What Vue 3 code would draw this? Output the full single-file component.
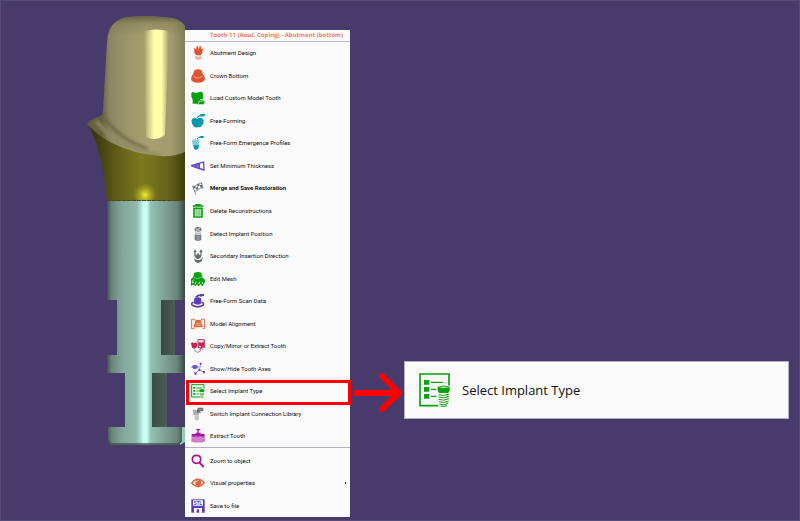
<template>
  <main class="scene">
    <!-- 3D preview of the abutment -->
    <svg class="model" viewBox="0 0 185 521" preserveAspectRatio="xMaxYMin slice" role="img" aria-label="Abutment preview">
      <defs>
        <linearGradient id="crown" gradientUnits="userSpaceOnUse" x1="102" y1="0" x2="194" y2="0">
          <stop offset="0" stop-color="#65613f" />
          <stop offset=".08" stop-color="#8b8660" />
          <stop offset=".3" stop-color="#9c976b" />
          <stop offset=".5" stop-color="#a7a170" />
          <stop offset=".75" stop-color="#a19b6d" />
          <stop offset="1" stop-color="#6f6b4a" />
        </linearGradient>
        <linearGradient id="crownTop" gradientUnits="userSpaceOnUse" x1="0" y1="16" x2="0" y2="36">
          <stop offset="0" stop-color="#4c4930" stop-opacity=".75" />
          <stop offset=".4" stop-color="#6e6a46" stop-opacity=".3" />
          <stop offset="1" stop-color="#6e6a46" stop-opacity="0" />
        </linearGradient>
        <linearGradient id="shine" gradientUnits="userSpaceOnUse" x1="144" y1="0" x2="169" y2="0">
          <stop offset="0" stop-color="#ffffaa" stop-opacity="0" />
          <stop offset=".4" stop-color="#ffffaa" />
          <stop offset=".7" stop-color="#ffffaa" />
          <stop offset="1" stop-color="#ffffaa" stop-opacity="0" />
        </linearGradient>
        <linearGradient id="gold" gradientUnits="userSpaceOnUse" x1="92" y1="0" x2="188" y2="0">
          <stop offset="0" stop-color="#36330f" />
          <stop offset=".25" stop-color="#5f5b17" />
          <stop offset=".52" stop-color="#7d791f" />
          <stop offset=".8" stop-color="#66621a" />
          <stop offset="1" stop-color="#393711" />
        </linearGradient>
        <radialGradient id="spark" gradientUnits="userSpaceOnUse" cx="145" cy="195" r="13">
          <stop offset="0" stop-color="#f4f02f" />
          <stop offset=".35" stop-color="#c4bf27" stop-opacity=".8" />
          <stop offset="1" stop-color="#8b8720" stop-opacity="0" />
        </radialGradient>
        <linearGradient id="steel" gradientUnits="userSpaceOnUse" x1="107" y1="0" x2="185" y2="0">
          <stop offset="0" stop-color="#43534e" />
          <stop offset=".06" stop-color="#6a857d" />
          <stop offset=".2" stop-color="#84a79c" />
          <stop offset=".38" stop-color="#8eb9ac" />
          <stop offset=".43" stop-color="#a6e0d2" />
          <stop offset=".47" stop-color="#ccfff4" />
          <stop offset=".51" stop-color="#ccfff4" />
          <stop offset=".56" stop-color="#91c2b4" />
          <stop offset=".7" stop-color="#84a89c" />
          <stop offset=".9" stop-color="#6a867c" />
          <stop offset="1" stop-color="#394641" />
        </linearGradient>
        <linearGradient id="dark" x1="0" y1="0" x2="1" y2="0">
          <stop offset="0" stop-color="#3b4844" />
          <stop offset="1" stop-color="#4c5d57" />
        </linearGradient>
        <filter id="soft"><feGaussianBlur stdDeviation="1.5" /></filter>
        <clipPath id="collarClip"><path :d="collar" /></clipPath>
      </defs>
      <path d="M87 124C96 137 103 160 107 201H185V145L110 140Z" fill="url(#gold)" />
      <ellipse cx="145" cy="193" rx="13" ry="9" fill="url(#spark)" />
      <path d="M107 200.5H185" stroke="#4a4618" stroke-dasharray="4 1" />
      <path :d="collar" fill="url(#crown)" />
      <path :d="collar" fill="url(#crownTop)" />
      <g clip-path="url(#collarClip)">
        <path d="M105 119C118 135 130 143 148 149" fill="none" stroke="#5d5938" stroke-width="3" filter="url(#soft)" opacity=".7" />
        <path d="M96 121C110 139 130 151 160 155" fill="none" stroke="#8f8b64" stroke-width="3" filter="url(#soft)" />
        <path d="M87 124L98 117L105 113" fill="none" stroke="#5f5c3c" stroke-width="2" filter="url(#soft)" />
      </g>
      <path d="M144 31Q156 28 169 31L165 135Q156 142 146 137Z" fill="url(#shine)" />

      <rect x="161" y="299" width="14" height="57" fill="url(#dark)" />
      <rect x="151" y="372" width="16" height="56" fill="url(#dark)" />
      <path d="M178 427H185V442L180 445Z" fill="#96cabb" />
      <path d="M107 201H185V300H161V355H185V373H152V427H182V441Q180 445 176 445H113Q108 445 108 440V427H125V373H107V355H117V300H107Z" fill="url(#steel)" />
      <path d="M108 440Q109 445 113 445H176Q180 445 182 440L178 443H112Z" fill="#394a43" opacity=".7" />
    </svg>

    <nav class="menu" aria-label="Tooth 11">
      <h1 class="menu_title">Tooth 11 (Anat. Coping) - Abutment (bottom)</h1>
      <ul v-for="(group, n) in groups" :key="n" class="group" :class="'group_' + n">
        <li v-for="item in group" :key="item.label" :class="{ marked: item.label === selected }">
          <button type="button" class="item" :class="{ bold: item.bold }" @click="selected = item.label">
            <svg class="icon" viewBox="0 0 42 42" aria-hidden="true" :color="item.color">
              <path
                v-for="(s, i) in item.shapes"
                :key="i"
                :d="s.d"
                :fill="s.w ? 'none' : s.c || 'currentColor'"
                :stroke="s.w ? s.c || 'currentColor' : 'none'"
                :stroke-width="s.w"
                :opacity="s.o"
              />
              <text v-if="item.tag" x="21" y="17" text-anchor="middle" class="tag">{{ item.tag }}</text>
            </svg>
            <span>{{ item.label }}</span>
            <span v-if="item.more" class="more" aria-hidden="true"></span>
          </button>
        </li>
      </ul>
    </nav>

    <section class="detail">
      <svg class="arrow" viewBox="0 0 54 57" aria-hidden="true">
        <path d="M6 32H48M32 15L49 32L32 48" fill="none" stroke="#fe0000" stroke-width="6" stroke-linecap="round" stroke-linejoin="round" />
      </svg>
      <div class="callout">
        <svg class="callout_icon" viewBox="0 0 93 102" fill="#0e9f12" aria-hidden="true">
          <path d="M58 98H3V3H90V38" fill="none" stroke="#0e9f12" stroke-width="5" />
          <path d="M15 21H31V35H15ZM15 42H31V56H15ZM15 63H31V77H15Z" />
          <path d="M36 28H72M36 49H52M36 70H52" fill="none" stroke="#0e9f12" stroke-width="4" />
          <path d="M56 42Q74 33 92 42V54L87 60H61L56 54Z" />
          <path d="M59 43Q74 38 89 43Q74 48 59 43Z" fill="#b6e2b6" />
          <path d="M59 65Q74 71 90 63M59 72Q74 78 90 70M59 79Q74 85 90 77M60 86Q74 92 89 84M61 93Q74 99 88 91M65 99Q75 102 84 98" fill="none" stroke="#0e9f12" stroke-width="3" />
        </svg>
        <span>Select Implant Type</span>
      </div>
    </section>
  </main>
</template>

<script setup>
import { ref } from 'vue';

const selected = ref('Select Implant Type');

const collar = 'M87 124Q93 118 98 117Q103 116 103 110L107 42Q108 20 128 17Q150 15 172 18Q182 20 187 29V151Q175 157 160 156Q134 154 112 143Q98 136 87 124Z';

// d: path, w: stroke width (filled when missing), c: colour, o: opacity
const groups = [
  [
    { label: 'Abutment Design', color: '#dc5530', shapes: [
      { d: 'M9 5L15 11L17 1H21L23 11L26 1H30L31 10L36 7L34 20L29 28H15L10 20Z' },
      { d: 'M13 29Q22 34 32 29Q34 41 22 41Q11 41 13 29Z', o: 0.45 },
    ] },
    { label: 'Crown Bottom', color: '#dc5530', shapes: [
      { d: 'M10 4Q21 -3 32 4L36 16Q42 21 42 30Q40 41 21 41Q2 41 0 30Q0 21 6 16Z' },
      { d: 'M8 20Q11 27 21 27Q31 27 34 20', w: 2, c: '#f7cfc4' },
    ] },
    { label: 'Load Custom Model Tooth', color: '#0ba010', shapes: [
      { d: 'M1 6Q6 0 12 5Q17 7 22 4Q32 0 36 7V24H24L19 38H5V26L1 17Z' },
      { d: 'M19 23H26L28 26H38V30H42L38 40H17Z' },
      { d: 'M22 39L25 30H41', w: 2, c: '#e2f4e2' },
    ] },
    { label: 'Free-Forming', color: '#0899ad', shapes: [
      { d: 'M4 14Q11 8 18 14L24 11Q36 10 38 20Q39 28 33 34Q30 42 24 39Q15 42 9 38Q-3 24 4 14Z' },
      { d: 'M18 11Q24 3 31 4', w: 4 },
      { d: 'M28 0H42V6L29 8Z' },
    ] },
    { label: 'Free-Form Emergence Profiles', color: '#0899ad', shapes: [
      { d: 'M5 8L9 14L13 5L17 15L21 5L25 15L24 29H7L3 18Z', o: 0.5 },
      { d: 'M7 28H24Q24 41 15 42Q7 40 7 28Z' },
      { d: 'M18 9Q22 2 29 3', w: 3 },
      { d: 'M27 0H38V6H28Z' },
    ] },
    { label: 'Set Minimum Thickness', color: '#6748bd', shapes: [
      { d: 'M1 20L22 13H24L38 9L39 33L20 27Z', w: 4 },
      { d: 'M10 21L25 16V25L12 22', w: 4 },
    ] },
    { label: 'Merge and Save Restoration', bold: true, color: '#606568', shapes: [
      { d: 'M5 15Q12 18 18 11Q25 4 32 6L36 21Q27 20 22 26Q16 32 9 29M5 15L14 41', w: 2 },
      { d: 'M6 17L12 15L14 21L8 23ZM18 11L24 7L26 13L20 17ZM14 21L20 17L22 24L17 27ZM26 13L33 12L35 19L29 20ZM29 6L32 5L33 9L30 10Z' },
    ] },
    { label: 'Delete Reconstructions', color: '#0ba010', shapes: [
      { d: 'M5 6H37M15 5V1H27V5', w: 5 },
      { d: 'M9 13H33V39H9Z', w: 5 },
      { d: 'M12 16H30V36H12Z', o: 0.3 },
      { d: 'M16 17V35M21 17V35M26 17V35', w: 2, o: 0.4 },
    ] },
    { label: 'Detect Implant Position', color: '#787c80', shapes: [
      { d: 'M11 3Q21 -3 31 3V12Q21 17 11 12Z' },
      { d: 'M14 5L20 8L27 4M15 11L20 8L26 11', w: 2, c: '#e7e7e8' },
      { d: 'M12 15Q21 20 30 15V20Q21 24 12 20Z', o: 0.5 },
      { d: 'M11 22Q21 26 31 22V38Q21 45 11 38Z' },
      { d: 'M15 30H27M17 36H25', w: 2, c: '#c7c9ca' },
    ] },
    { label: 'Secondary Insertion Direction', color: '#666a6d', shapes: [
      { d: 'M12 5V19Q15 28 21 28Q28 27 30 19V5', w: 4 },
      { d: 'M8 9L12 1L17 9ZM25 9L30 1L35 9ZM14 21L21 11L28 21L24 28H18Z' },
      { d: 'M9 22Q10 34 21 33Q32 34 35 22L33 35Q27 42 21 41Q13 42 11 35Z' },
    ] },
    { label: 'Edit Mesh', color: '#0ba010', shapes: [
      { d: 'M10 2Q21 -2 31 2L34 16L42 24V31L36 29L31 35L26 29L21 37L16 29L10 35L6 27L0 29V21L7 15Z' },
      { d: 'M2 28V38L8 34L13 40L18 33L23 40L29 33L34 40L40 29', w: 4 },
      { d: 'M8 16L19 20L33 16M3 26L10 23', w: 2, c: '#a0dba2' },
    ] },
    { label: 'Free-Form Scan Data', color: '#5c40b3', shapes: [
      { d: 'M10 13Q21 6 30 13L32 28Q21 36 8 28Z' },
      { d: 'M7 25Q-1 28 4 34Q20 43 36 34Q40 28 33 25', w: 5 },
      { d: 'M14 10Q23 2 30 4', w: 5 },
      { d: 'M27 0H39V6L28 8Z' },
    ] },
    { label: 'Model Alignment', color: '#e3663b', shapes: [
      { d: 'M7 7H2V35H7M35 7H40V35H35', w: 3 },
      { d: 'M13 9H29L31 19Q35 21 35 31H8Q7 22 12 19Z' },
      { d: 'M14 20H30M15 25H29', w: 2, c: '#f5c8b7' },
      { d: 'M8 4L13 8L8 11ZM34 4V11L29 8ZM8 32H14L8 37Z' },
    ] },
    { label: 'Copy/Mirror or Extract Tooth', color: '#bd254f', shapes: [
      { d: 'M0 13L5 10L9 13L15 10L19 14L17 25L11 29L3 26Z' },
      { d: 'M21 2H40V26H21Z', w: 3 },
      { d: 'M22 13L27 8L31 12L39 7V23L31 24L27 20L22 23Z' },
      { d: 'M11 30Q11 40 20 40Q29 40 30 29M25 33L30 27L35 33', w: 2 },
    ] },
    { label: 'Show/Hide Tooth Axes', color: '#6850b8', shapes: [
      { d: 'M0 15Q12 2 24 15Q12 28 0 15Z', o: 0.75 },
      { d: 'M12 9Q18 10 18 15Q17 21 12 21Q6 20 6 15Q7 10 12 9Z' },
      { d: 'M12 35L25 24L39 31M25 24L29 5', w: 2 },
      { d: 'M10 31H17V38H10ZM36 27H42V34H36ZM26 2H32V8H26ZM22 21H28V27H22Z' },
    ] },
    { label: 'Select Implant Type', color: '#0ba010', shapes: [
      { d: 'M28 39H2V2H39V14', w: 3 },
      { d: 'M7 9H13V14H7ZM7 18H13V23H7ZM7 27H13V32H7Z' },
      { d: 'M16 12H32M16 21H23M16 30H23', w: 3 },
      { d: 'M25 17Q33 13 40 17V24H25Z' },
      { d: 'M27 28H39M27 32H39M28 36H38M29 40H37', w: 2 },
    ] },
    { label: 'Switch Implant Connection Library', color: '#696d70', shapes: [
      { d: 'M20 2H37V12H28V17H18V7H20Z' },
      { d: 'M22 6L28 9L34 5M32 12V16L25 21', w: 2, c: '#b6b8ba' },
      { d: 'M5 11Q10 5 17 10L23 16V24H8Z', o: 0.55 },
      { d: 'M11 24H24V35L20 41H15L11 36Z', o: 0.3 },
      { d: 'M12 29H23M12 34H22', w: 2, o: 0.35 },
    ] },
    { label: 'Extract Tooth', color: '#a914a5', shapes: [
      { d: 'M1 22Q21 16 42 22V38Q21 43 1 38Z', o: 0.55 },
      { d: 'M2 21V15H14V11H29V15H41V21Q33 26 28 21Q21 26 15 21Q9 26 2 21Z' },
      { d: 'M21 2V14M16 2H28', w: 4 },
    ] },
  ],
  [
    { label: 'Zoom to object', color: '#a511a2', shapes: [
      { d: 'M16 4Q29 4 29 16Q29 28 16 28Q4 28 4 16Q4 4 16 4Z', w: 5 },
      { d: 'M25 25L38 39', w: 6 },
    ] },
    { label: 'Visual properties', color: '#df6038', shapes: [
      { d: 'M2 21Q20 -2 40 20Q22 43 2 21Z', w: 4 },
      { d: 'M22 10Q31 11 31 20Q30 30 22 30Q13 29 13 20Q13 11 22 10Z' },
      { d: 'M17 18Q18 13 23 13', w: 3, c: '#fbe5dd' },
    ] },
    { label: 'Save to file', color: '#5a3bb3', tag: 'STL', shapes: [
      { d: 'M1 1H41V41H1Z' },
      { d: 'M6 4H36V20H6ZM9 27H33V41H9Z', c: '#fafafa' },
      { d: 'M17 31H24V41H17Z' },
    ] },
  ],
];
groups[1][1].more = true;
</script>

<style>
body {
  background: #483b6c;
}
</style>

<style scoped>
.scene {
  display: grid;
  grid-template-columns: minmax(185px, 23fr) minmax(165px, 21fr) minmax(439px, 55fr) 11px;
  min-height: 100vh;
  box-sizing: border-box;
  background: #483b6c;
  box-shadow: inset 0 0 0 1px #574b79;
  font-family: "Open Sans", "Noto Sans", sans-serif;
  color: #111;
}
.model {
  width: 100%;
  height: 521px;
}
.menu {
  display: flex;
  flex-direction: column;
  margin: 30px 0 4px;
  background: #fafafa;
  text-rendering: geometricPrecision;
}
.menu_title {
  margin: 0;
  padding-left: 25px;
  border-bottom: 1px solid #b9b7cb;
  font-size: 6px;
  line-height: 11px;
  font-weight: 700;
  color: #ee8360;
  white-space: nowrap;
}
.group {
  display: flex;
  flex-direction: column;
  margin: 0;
  padding: 0;
  list-style: none;
}
.group_0 {
  flex: 18;
}
.group_1 {
  flex: 3;
  padding-top: 1px;
  border-top: 1px solid #b0afc4;
}
.group li {
  position: relative;
  display: flex;
  flex: 1;
}
.item {
  display: flex;
  flex: 1;
  align-items: center;
  gap: 5px;
  padding: 0 4px 0 6px;
  border: 0;
  background: none;
  font-family: Roboto, "Open Sans", sans-serif;
  font-size: 6px;
  line-height: 8px;
  color: inherit;
  white-space: nowrap;
  cursor: pointer;
}
.bold {
  font-weight: 700;
}
.icon {
  flex: none;
  width: 14px;
  height: 14px;
}
.tag {
  font-size: 14px;
  font-weight: 700;
  fill: currentColor;
}
.more {
  width: 1px;
  height: 2px;
  margin-left: auto;
  background: #333;
}
/* red frame over the chosen row */
.marked::after {
  content: "";
  position: absolute;
  inset: 0 -1px -2px 1px;
  border: 3px solid #fe0000;
  pointer-events: none;
}
.detail {
  display: flex;
  align-items: flex-start;
  padding-top: 361px;
}
.arrow {
  flex: none;
  width: 54px;
  height: 57px;
}
.callout {
  display: flex;
  flex: 1;
  align-items: center;
  gap: 12px;
  box-sizing: border-box;
  padding: 11px 14px;
  border: 1px solid #b5afc5;
  background: #fafafa;
  font-size: 13px;
  line-height: 18px;
  white-space: nowrap;
}
.callout_icon {
  width: 31px;
  height: 34px;
}
</style>
